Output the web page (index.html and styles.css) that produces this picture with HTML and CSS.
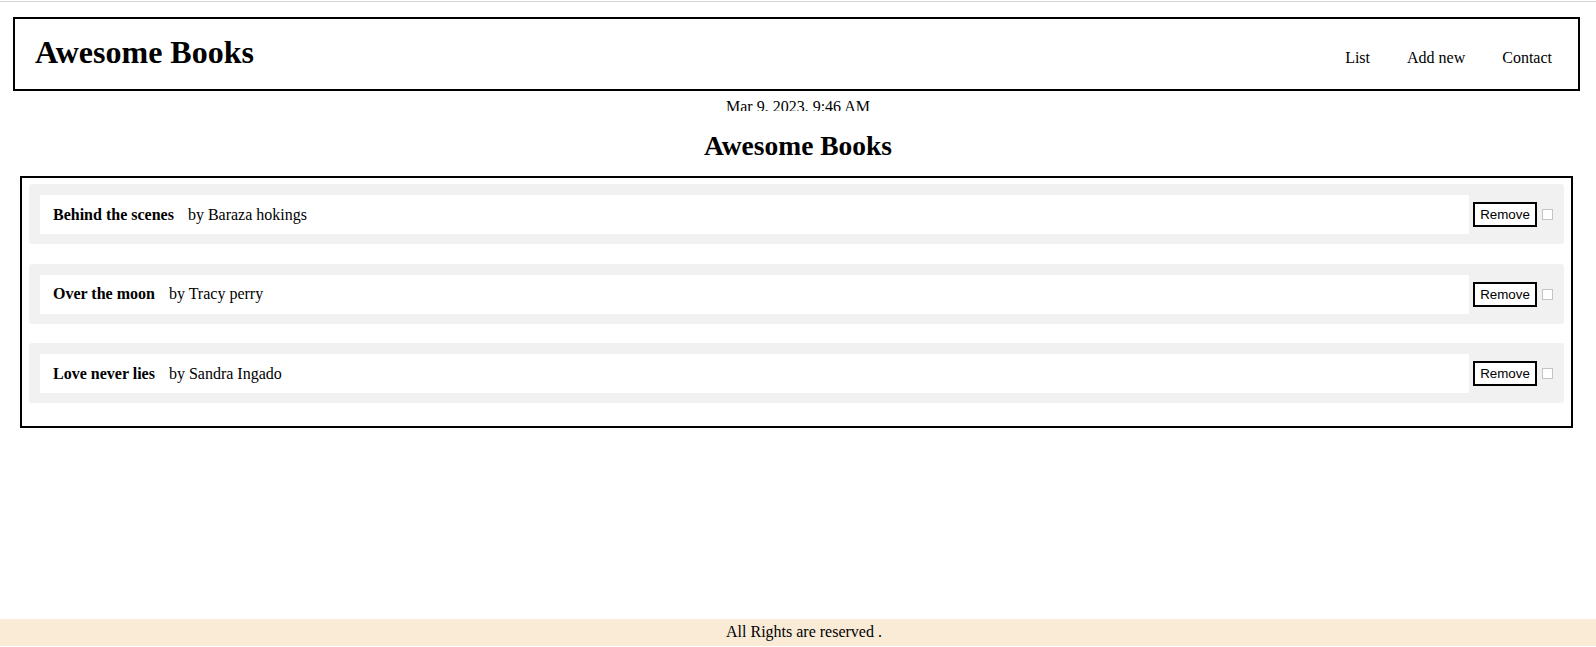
FILE: index.html
```html
<!DOCTYPE html>
<html lang="en">
<head>
<meta charset="utf-8">
<title>Awesome Books</title>
<link rel="stylesheet" href="styles.css">
</head>
<body>
<div class="page">
  <div class="topline"></div>
  <header class="header">
    <h1 class="brand">Awesome Books</h1>
    <nav class="nav">
      <a class="nav-link" href="#">List</a>
      <a class="nav-link" href="#">Add new</a>
      <a class="nav-link" href="#">Contact</a>
    </nav>
  </header>
  <div class="date">Mar 9, 2023, 9:46 AM</div>
  <h2 class="section-title">Awesome Books</h2>
  <section class="book-list">
    <div class="book">
      <div class="book-info"><span class="book-title">Behind the scenes</span><span class="book-author">by Baraza hokings</span></div>
      <button class="remove-btn" type="button">Remove</button>
      <input class="book-check" type="checkbox">
    </div>
    <div class="book">
      <div class="book-info"><span class="book-title">Over the moon</span><span class="book-author">by Tracy perry</span></div>
      <button class="remove-btn" type="button">Remove</button>
      <input class="book-check" type="checkbox">
    </div>
    <div class="book">
      <div class="book-info"><span class="book-title">Love never lies</span><span class="book-author">by Sandra Ingado</span></div>
      <button class="remove-btn" type="button">Remove</button>
      <input class="book-check" type="checkbox">
    </div>
  </section>
  <footer class="footer">All Rights are reserved .</footer>
</div>
</body>
</html>
```

FILE: styles.css
```css
* {
  box-sizing: border-box;
}

html, body {
  margin: 0;
  padding: 0;
  background: #ffffff;
}

body {
  font-family: "Liberation Serif", "Times New Roman", serif;
  font-size: 16px;
  color: #000;
}

.page {
  min-height: 100vh;
  display: flex;
  flex-direction: column;
}

.topline {
  height: 1px;
  margin-top: 1px;
  background: #d6d6d6;
}

.header {
  margin: 15px 16px 0 13px;
  height: 74px;
  border: 2px solid #000;
  display: flex;
  align-items: baseline;
  justify-content: space-between;
  padding: 15px 26px 0 20px;
}

.brand {
  margin: 0;
  font-size: 32px;
  font-weight: bold;
  line-height: normal;
}

.nav {
  display: flex;
  gap: 37px;
}

.nav-link {
  color: #000;
  text-decoration: none;
  font-size: 16px;
}

.date {
  margin-top: 7px;
  height: 13px;
  overflow: hidden;
  text-align: center;
  line-height: normal;
  font-size: 16px;
}

.section-title {
  margin: 20px 0 15px;
  text-align: center;
  font-size: 27.5px;
  line-height: 30px;
  font-weight: bold;
}

.book-list {
  margin: 0 23px 0 20px;
  border: 2px solid #000;
  padding: 6px 7px 23px;
  display: flex;
  flex-direction: column;
  gap: 19.5px;
}

.book {
  height: 60px;
  background: #f1f1f1;
  border-radius: 3px;
  display: flex;
  align-items: center;
  padding: 11px 11px 10px;
}

.book-info {
  flex: 1;
  height: 39px;
  background: #fff;
  display: flex;
  align-items: center;
  padding-left: 13px;
  font-size: 16px;
}

.book-title {
  font-weight: bold;
  margin-right: 14px;
}

.remove-btn {
  margin: 0 0 0 4px;
  width: 64px;
  height: 25px;
  padding: 0;
  border: 2px solid #000;
  background: #fff;
  font-family: "Liberation Sans", Arial, sans-serif;
  font-size: 13.33px;
  color: #000;
  border-radius: 0;
}

.book-check {
  appearance: none;
  -webkit-appearance: none;
  margin: 0 0 0 5px;
  width: 11px;
  height: 11px;
  border: 1px solid #c4c4c4;
  background: #fff;
  border-radius: 0;
}

.footer {
  margin-top: auto;
  margin-bottom: 1px;
  height: 27px;
  background: #faebd7;
  display: flex;
  align-items: center;
  justify-content: center;
  padding: 0 0 1px 12px;
  font-size: 16px;
}
```
